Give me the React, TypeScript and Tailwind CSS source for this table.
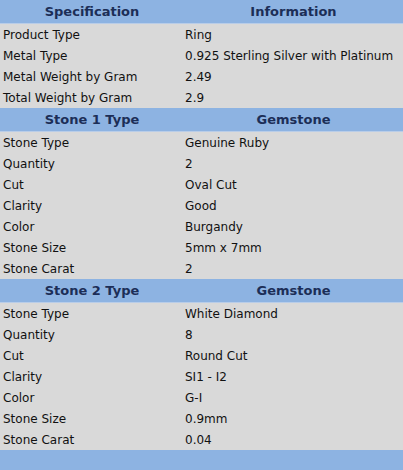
const SECTIONS = [
  {
    head: ['Specification', 'Information'],
    rows: [
      ['Product Type', 'Ring'],
      ['Metal Type', '0.925 Sterling Silver with Platinum'],
      ['Metal Weight by Gram', '2.49'],
      ['Total Weight by Gram', '2.9'],
    ],
  },
  {
    head: ['Stone 1 Type', 'Gemstone'],
    rows: [
      ['Stone Type', 'Genuine Ruby'],
      ['Quantity', '2'],
      ['Cut', 'Oval Cut'],
      ['Clarity', 'Good'],
      ['Color', 'Burgandy'],
      ['Stone Size', '5mm x 7mm'],
      ['Stone Carat', '2'],
    ],
  },
  {
    head: ['Stone 2 Type', 'Gemstone'],
    rows: [
      ['Stone Type', 'White Diamond'],
      ['Quantity', '8'],
      ['Cut', 'Round Cut'],
      ['Clarity', 'SI1 - I2'],
      ['Color', 'G-I'],
      ['Stone Size', '0.9mm'],
      ['Stone Carat', '0.04'],
    ],
  },
]

export default function App() {
  return (
    <div className="flex h-[470px] w-[403px] flex-col overflow-hidden bg-[#8db3e2] font-['DejaVu_Sans',sans-serif] text-[12px] text-[#111]">
      {SECTIONS.map((section) => (
        <div key={section.head[0]}>
          <div className="flex h-[24px] items-center border-b border-[#b9cde8] text-[13px] font-bold text-[#1c2e57]">
            <div className="w-[184px] shrink-0 text-center">{section.head[0]}</div>
            <div className="flex-1 text-center">{section.head[1]}</div>
          </div>
          {section.rows.map(([label, value]) => (
            <div key={label} className="flex h-[21px] items-center bg-[#d9d9d9]">
              <div className="w-[184px] shrink-0 whitespace-nowrap pl-[3px]">{label}</div>
              <div className="min-w-0 flex-1 whitespace-nowrap pl-[1px]">{value}</div>
            </div>
          ))}
        </div>
      ))}
      <div className="flex-1" />
    </div>
  )
}
